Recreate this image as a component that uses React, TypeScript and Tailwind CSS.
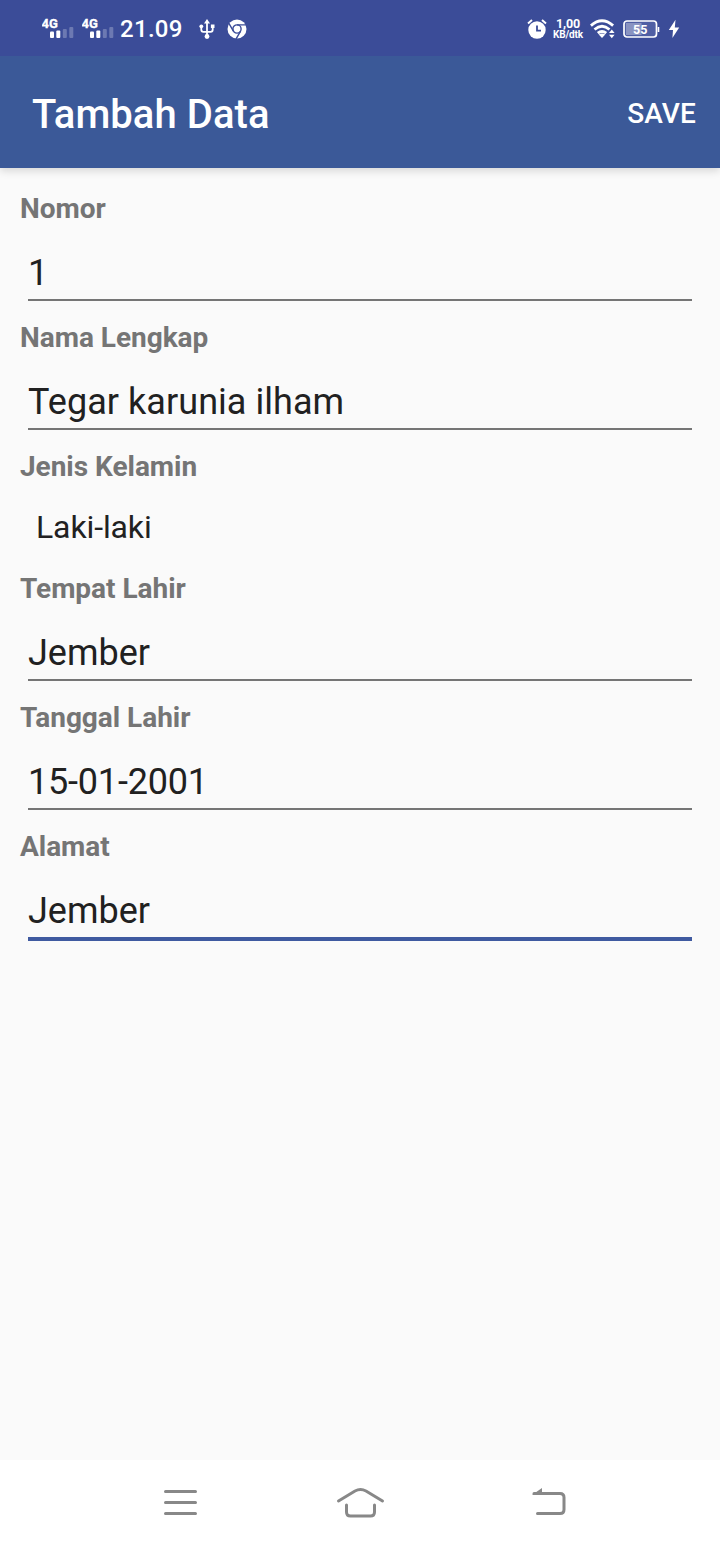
type FieldProps = { label: string; value: string; focused?: boolean; tracking?: string };

function Label({ text }: { text: string }) {
  return <div className="h-[38px] pl-5 text-[28px] leading-[38px] font-bold tracking-[-0.03px] text-[#757575]">{text}</div>;
}

function Field({ label, value, focused, tracking = "tracking-normal" }: FieldProps) {
  return (
    <div className="h-[129px]">
      <Label text={label} />
      <div className={`mx-7 mt-6 box-content h-[47px] text-[36px] leading-[42px] text-[#212121] ${tracking} ${focused ? "border-b-4 border-[#3f5aa0]" : "border-b-2 border-[#757575]"}`}>
        {value}
      </div>
    </div>
  );
}

function Signal() {
  return (
    <svg width="34" height="24" viewBox="0 0 34 24" fill="#fff">
      <text x="-0.5" y="11.5" fontFamily="Roboto" fontSize="13" fontWeight="700" stroke="#fff" strokeWidth=".3">4G</text>
      <rect x="8" y="15.5" width="4" height="6.5" rx="1" />
      <rect x="14.3" y="14.500" width="4" height="7.5" rx="1" />
      <rect x="20.8" y="13" width="4" height="9" rx="1" opacity=".25" />
      <rect x="27.3" y="11" width="4" height="11" rx="1" opacity=".25" />
    </svg>
  );
}

function StatusBar() {
  return (
    <header className="z-20 flex h-14 items-center justify-between bg-[#3b4c98] pt-px pr-10 pl-[42px] text-white">
      <div className="flex items-center">
        <div className="-mt-px flex gap-1.5">
          <Signal />
          <Signal />
        </div>
        <span className="ml-1 w-[64px] pt-px text-[24px] leading-7 font-medium tracking-[0.3px] whitespace-nowrap">21.09</span>
        <svg className="ml-[15px]" width="16" height="20" viewBox="0 0 16 20" fill="none" stroke="#fff" strokeWidth="1.8">
          <path d="M8 3v14M2.3 8v2.8q0 2 2 2H8M13.7 8v2.8q0 2-2 2H8" />
          <path d="M8 0l3 4.5H5z" fill="#fff" stroke="none" />
          <circle cx="2.3" cy="7.3" r="1.9" fill="#fff" stroke="none" />
          <path d="M11.9 5.5h3.6V9h-3.6z" fill="#fff" stroke="none" />
          <circle cx="8" cy="17.5" r="2.4" fill="#fff" stroke="none" />
        </svg>
        <svg className="ml-3" width="20" height="20" viewBox="0 0 20 20">
          <circle cx="10" cy="10" r="9.5" fill="#fff" />
          <circle cx="10" cy="10" r="4.1" fill="none" stroke="#3b4c98" strokeWidth="1.4" />
          <path d="M10 5.9h9M6.4 12.1L1.9 4.3M13.6 12.1l-4.5 7.8" fill="none" stroke="#3b4c98" strokeWidth="1.4" />
        </svg>
      </div>
      <div className="flex items-center">
        <svg width="20" height="20" viewBox="0 0 20 20" fill="none" stroke="#fff">
          <circle cx="10" cy="11" r="8.7" fill="#fff" stroke="none" />
          <path d="M1 4.5l4-3.4M19 4.5l-4-3.4" strokeWidth="2" />
          <path d="M10 6.5v5.200h4" stroke="#3b4c98" strokeWidth="1.8" />
        </svg>
        <div className="ml-[5px] flex w-8 flex-col items-center font-bold whitespace-nowrap">
          <span className="text-[12.5px] leading-[11px] tracking-[-0.1px]">1,00</span>
          <span className="text-[10px] leading-[11px] tracking-[-0.1px]">KB/dtk</span>
        </div>
        <svg className="ml-1.5" width="26" height="20" viewBox="0 0 26 20" fill="none" stroke="#fff" strokeWidth="2.8">
          <path d="M.9 6.6Q12 -3 23.1 6.6M4.5 10.5Q12 4 19.5 10.5M7.800 14.2Q12 10.8 16.2 14.2" />
          <path d="M8.7 15.5Q12 13.5 15.3 15.5L12 19z" fill="#fff" stroke="none" />
          <path d="M19 14l2.8-3.5 2.8 3.5zM19 15.7l2.8 3.5 2.8-3.5z" fill="#fff" stroke="none" />
        </svg>
        <svg className="ml-[7px]" width="37" height="20" viewBox="0 0 37 20">
          <rect x="1" y="2" width="32.5" height="16" rx="3" fill="#4f5fa4" stroke="#fff" strokeWidth="1.7" />
          <rect x="3" y="4" width="15.500" height="12" fill="#8993c1" />
          <path d="M35.5 8v5" stroke="#fff" strokeWidth="1.6" />
          <text x="17.2" y="15" textAnchor="middle" fontFamily="Roboto" fontSize="12.5" fontWeight="700" fill="#fff">55</text>
        </svg>
        <svg className="ml-2" width="12" height="20" viewBox="0 0 12 20">
          <path d="M7.5 .8L.8 11h4.2L4.4 19 11.2 8.6H6.8z" fill="#fff" />
        </svg>
      </div>
    </header>
  );
}

export default function App() {
  return (
    <div className="flex h-[1544px] w-[720px] flex-col overflow-hidden bg-[#fafafa] font-[Roboto,sans-serif]">
      <StatusBar />
      <div className="z-10 flex h-28 items-center justify-between bg-[#3b5998] pr-6 pl-8 text-white shadow-[0_3px_8px_rgba(0,0,0,0.14)]">
        <h1 className="pt-[5px] text-[40px] leading-[47px] font-medium tracking-[0.05px]">Tambah Data</h1>
        <button className="pt-[3px] text-[28px] leading-[33px] font-medium tracking-[0.15px]">SAVE</button>
      </div>
      <main className="flex-1 pt-[22px]">
        <Field label="Nomor" value="1" />
        <Field label="Nama Lengkap" value="Tegar karunia ilham" tracking="tracking-[0.05px]" />
        <div className="h-[122px]">
          <Label text="Jenis Kelamin" />
          <div className="mt-[22px] pl-9 text-[32px] leading-[38px] tracking-[-0.12px] text-[#212121]">Laki-laki</div>
        </div>
        <Field label="Tempat Lahir" value="Jember" />
        <Field label="Tanggal Lahir" value="15-01-2001" tracking="tracking-[-0.2px]" />
        <Field label="Alamat" value="Jember" focused />
      </main>
      <nav className="flex h-[84px] items-center bg-white pl-[163px]">
        <svg width="35" height="28" viewBox="0 0 35 28" stroke="#888" strokeWidth="3" strokeLinecap="round">
          <path d="M2.5 3.5h30M2.5 14.5h30M2.5 25.5h30" />
        </svg>
        <svg className="ml-[138px]" width="49" height="32" viewBox="0 0 49 32" fill="none" stroke="#888" strokeWidth="3" strokeLinecap="round">
          <path d="M2.500 15L19 5Q24.500 2 30 5L46.500 15M10.500 19v7q0 4 4 4h20q4 0 4-4v-7" />
        </svg>
        <svg className="ml-[146px]" width="36" height="28" viewBox="0 0 36 28" fill="none" stroke="#888" strokeWidth="3">
          <path d="M3 5.5h26q4 0 4 4v12q0 4-4 4H6.500" strokeLinecap="round" />
          <path d="M1 7h10V0z" fill="#888" stroke="none" />
        </svg>
      </nav>
    </div>
  );
}
